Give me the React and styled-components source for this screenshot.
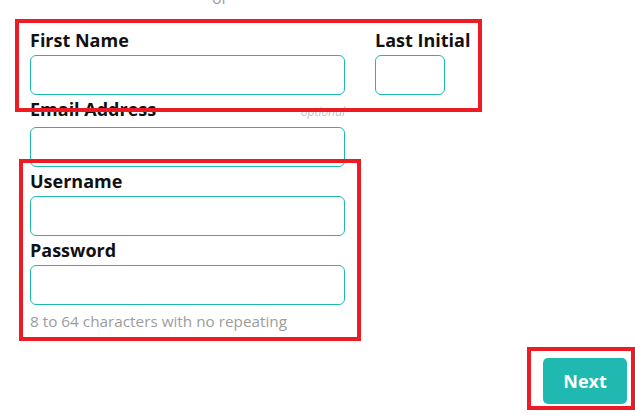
import React from 'react'
import styled, { createGlobalStyle } from 'styled-components'

const GlobalStyle = createGlobalStyle`
  html, body {
    margin: 0;
    padding: 0;
    background: #fff;
    overflow: hidden;
  }
  body {
    font-family: "Open Sans", "Liberation Sans", sans-serif;
  }
`

const App = () => {
  return (
    <>
      <GlobalStyle />
      <Page>
        <Divider>or</Divider>
        <Form>
          <NameRow>
            <Field width="315px">
              <Label>First Name</Label>
              <Input type="text" />
            </Field>
            <Field width="70px">
              <Label>Last Initial</Label>
              <Input type="text" maxLength={1} />
            </Field>
          </NameRow>

          <Field width="315px">
            <LabelRow tall>
              <Label>Email Address</Label>
              <Optional>optional</Optional>
            </LabelRow>
            <Input type="email" />
          </Field>

          <Field width="315px">
            <Label>Username</Label>
            <Input type="text" />
          </Field>

          <Field width="315px">
            <Label>Password</Label>
            <Input type="password" />
            <Hint>8 to 64 characters with no repeating</Hint>
          </Field>
        </Form>

        <Footer>
          <NextButton type="button">Next</NextButton>
        </Footer>

        {/* annotation boxes */}
        <Mark style={{ left: 15, top: 19, width: 467, height: 93 }} />
        <Mark style={{ left: 19, top: 159, width: 342, height: 182 }} />
        <Mark style={{ left: 527, top: 347, width: 108, height: 63 }} />
      </Page>
    </>
  )
}

export default App

const Page = styled.div`
  position: relative;
  display: flow-root;
  width: 635px;
  height: 415px;
  padding: 0 8px 0 30px;
  box-sizing: border-box;
`
const Divider = styled.div`
  width: 380px;
  margin-top: -13px;
  text-align: center;
  color: #9a9a9a;
  font-size: 16px;
  line-height: 22px;
`
const Form = styled.form`
  display: flex;
  flex-direction: column;
  row-gap: 2px;
  margin-top: 19px;
`
const NameRow = styled.div`
  display: flex;
  column-gap: 30px;
`
const Field = styled.div`
  display: flex;
  flex-direction: column;
  width: ${(p) => p.width};
`
const LabelRow = styled.div`
  display: flex;
  justify-content: space-between;
  align-items: baseline;
  margin-bottom: ${(p) => (p.tall ? '3px' : '0')};
`
const Label = styled.label`
  display: block;
  color: #111;
  font-size: 18px;
  font-weight: 700;
  line-height: 24px;
  white-space: nowrap;
`
const Optional = styled.span`
  color: #c4c4c4;
  font-size: 12px;
  font-style: italic;
`
const Input = styled.input`
  box-sizing: border-box;
  width: 100%;
  height: 40px;
  margin-top: 3px;
  padding: 0 10px;
  border: 1px solid #1fb8b1;
  border-radius: 6px;
  font-family: inherit;
  font-size: 16px;
  outline: none;
`
const Hint = styled.div`
  margin-top: 6px;
  color: #9c9c9c;
  font-size: 15.3px;
  line-height: 20px;
`
const Footer = styled.div`
  display: flex;
  justify-content: flex-end;
  margin-top: 27px;
`
const NextButton = styled.button`
  width: 84px;
  height: 46px;
  border: none;
  border-radius: 5px;
  background-color: #20b9b1;
  color: #fff;
  font-family: inherit;
  font-size: 18px;
  font-weight: 700;
  cursor: pointer;
`
const Mark = styled.div`
  position: absolute;
  box-sizing: border-box;
  border: 4.5px solid #ed1c24;
  pointer-events: none;
`
